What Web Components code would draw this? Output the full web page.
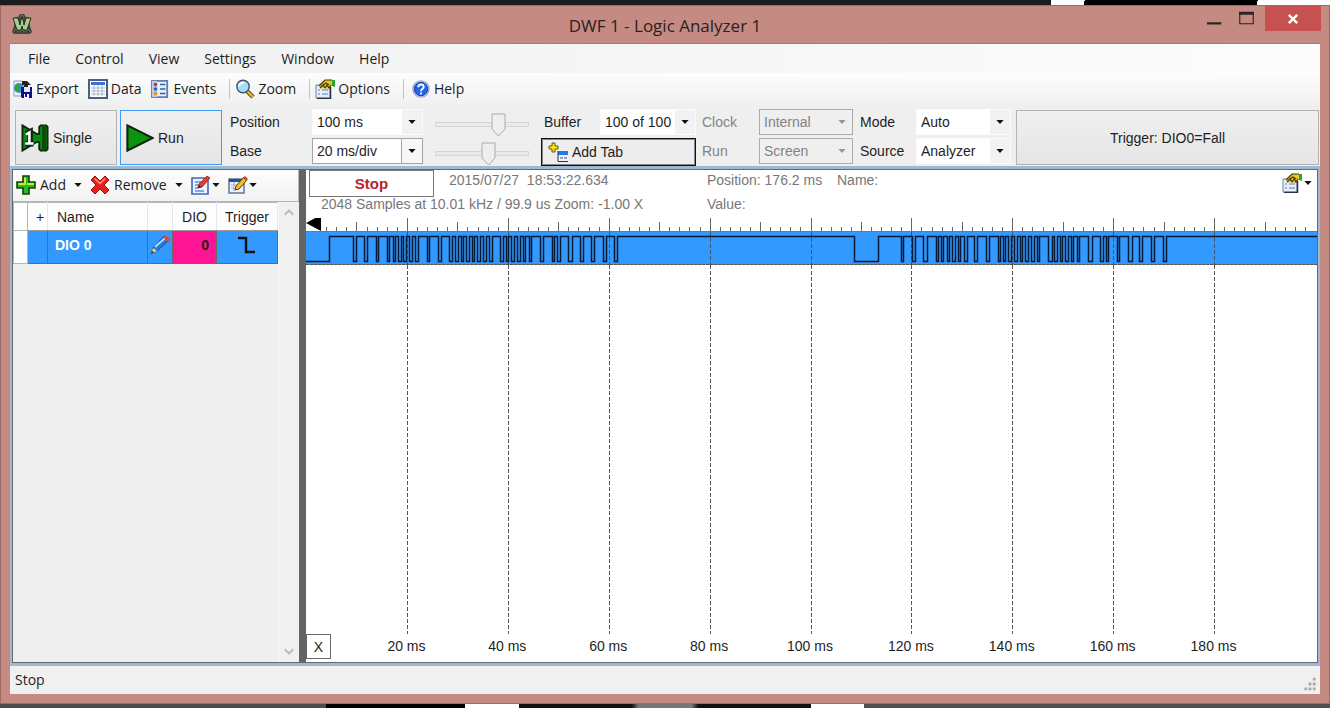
<!DOCTYPE html>
<html lang="en">
<head>
<meta charset="utf-8">
<title>DWF 1 - Logic Analyzer 1</title>
<style>
html, body { height: 100%; margin: 0; }
body {
  display: flex; flex-direction: column; box-sizing: border-box; padding: 5px 0 4px;
  font-family: "Liberation Sans", Arial, sans-serif; font-size: 14px; line-height: 16px; color: #1e1e1e;
  background:
    linear-gradient(100deg, #1c1c1c 79%, #fff 79% 81.5%, #000 81.5% 94.5%, #fff 94.5%) top / 100% 5px no-repeat,
    linear-gradient(90deg, #4c4c4c 24.5%, #000 24.5% 35%, #fff 35% 39%, #111 39% 47.5%, #777 48% 52%, #111 52.5% 61%, #fff 61% 65%, #4f4f4f 65%) bottom / 100% 4px no-repeat,
    #4c4c4c;
}
</style>
</head>
<body>
<dw-window>
  <dw-titlebar>DWF 1 - Logic Analyzer 1</dw-titlebar>
  <dw-menubar></dw-menubar>
  <dw-toolbar></dw-toolbar>
  <dw-controls></dw-controls>
  <dw-workspace></dw-workspace>
  <dw-status>Stop</dw-status>
</dw-window>

<script>
const define = (name, html, ready) => {
  const tpl = document.createElement('template');
  tpl.innerHTML = html;
  customElements.define(name, class extends HTMLElement {
    connectedCallback() {
      if (this.shadowRoot) return;
      const root = this.attachShadow({ mode: 'open' });
      root.append(tpl.content.cloneNode(true));
      if (ready) ready.call(this, root);
    }
  });
};

const icons = {
  app: `<path d="M6 3l2-3h4l2 3 3 0 1 9 2 6-2 2H2l-2-2 2-6 1-9z" fill="#42473f"/><path d="M2 18q2-4 4 0M8 18q2-4 4 0M14 18q2-4 4 0M8 4l2-3 2 3" fill="#20231e" stroke="#7b8076"/><path d="M1 4h5l2 7 1-6h2l1 6 2-7h5l-4 12h-4l-1-4-1 4H5z" fill="#a5cd91" stroke="#27321f"/>`,
  export: `<path d="M1 2h8l3 3v12H1z" fill="#edf3fb" stroke="#8b9bb4"/><circle cx="6" cy="9" r="5" fill="#3b8fd0"/><path d="M2 7l4-3 1 4-2 5-3-2z" fill="#36a03a"/><path d="M9 6V2h5l4 4h-3v3h-4V6z" fill="#222"/><path d="M8 8h11v11H9l-1-1z" fill="#11118a"/><path d="M11 8h6v5h-6z" fill="#dfe8fb"/><path d="M11 15h5v4h-5z" fill="#fff"/><path d="M12 15h2v3h-2z" fill="#11118a"/>`,
  data: `<path d="M1 1h18v18H1z" fill="#fff" stroke="#4b5f86" stroke-width="2"/><path d="M3 3h14v3H3z" fill="#3c73d8"/><path d="M3 9h14M3 12h14M3 15h14M6 6v11M10 6v11M14 6v11" stroke="#a4b4cf"/>`,
  events: `<path d="M1 1h17v18H1z" fill="#e5eefb" stroke="#5f7dad" stroke-width="2"/><path d="M1 1h6v18H1z" fill="#b8cdef"/><circle cx="5" cy="5" r="2" fill="#d82b20"/><circle cx="5" cy="10" r="2" fill="#2359cb"/><circle cx="5" cy="15" r="2" fill="#e79119"/><path d="M10 5h6M10 10h6M10 15h6" stroke="#3a5fa2" stroke-width="1.5"/>`,
  zoom: `<path d="M12 12l6 6" stroke="#6e4b05" stroke-width="4.5"/><path d="M12 12l6 6" stroke="#e9b831" stroke-width="2.4"/><circle cx="8" cy="7.500" r="6.200" fill="#a7ddf8" stroke="#3d5366" stroke-width="1.4"/><path d="M4 7q1-4 5-3" stroke="#fff" stroke-width="2" fill="none"/>`,
  options: `<path d="M1 6h14v13H1z" fill="#e6eefb" stroke="#6d83a8"/><path d="M3 11h2M3 15h2M7 11h6M7 15h6" stroke="#8fa3c6" stroke-width="1.5"/><path d="M15.500 8v11.500H2" stroke="#26344c" stroke-width="1.500" fill="none"/><path d="M4 6l6-5h7l2 2v4h-4l-2 4-3-3-4 2-1-2z" fill="#eac623"/><path d="M4 7l6-6h7M5 9l3-3 2 3 2-3 2 3 2-3M8 6l3-2 3 2" stroke="#40370a" stroke-width="1.200" fill="none"/><path d="M17 1h3v7l-3-1z" fill="#27a736"/>`,
  help: `<circle cx="10" cy="10" r="9" fill="#fff" stroke="#9aa9cf" stroke-width="1.500"/><circle cx="10" cy="10" r="7.500" fill="#2463e8" stroke="#0b2d9c"/><path d="M7 8q0-3 3-3t3 2.600q0 1.500-1.500 2.400T10 12.500M10 14v2" fill="none" stroke="#fff" stroke-width="2"/>`,
  add: `<path d="M7 1h6v6h6v6h-6v6H7v-6H1V7h6z" fill="#22bd22" stroke="#17430c" stroke-width="1.6"/><path d="M9 2.500v6.500H2.500M11 9h7" stroke="#d3e52c" stroke-width="2" fill="none"/>`,
  remove: `<path d="M5 1l5 5 5-5 4 4-5 5 5 5-4 4-5-5-5 5-4-4 5-5-5-5z" fill="#e3221c" stroke="#a40b08"/><path d="M4.500 3.500l5.500 5 5-5" stroke="#ff9285" stroke-width="1.500" fill="none"/>`,
  edit: `<path d="M1 3h16v16H1z" fill="#eaf1ff" stroke="#3c68bd" stroke-width="1.600"/><path d="M4 7h6M4 10h4M4 16h9M4 13h3" stroke="#6b8dd0" stroke-width="1.500"/><path d="M7 13l1-4 8-8 3 2-8 9z" fill="#e2402c" stroke="#8e1d14" stroke-width=".8"/><path d="M7 13l1-3 2 2z" fill="#222"/>`,
  sheet: `<path d="M1 4h15v14H1z" fill="#eef3fb" stroke="#62779b" stroke-width="1.500"/><path d="M1 4h12v3H1z" fill="#254f9d"/><path d="M3 10h7M3 13h5M6 7v9" stroke="#9bb0d3"/><path d="M7 15l1-4 8-9 3 3-8 9z" fill="#f0bf29" stroke="#574008"/><path d="M15 3l2-2 3 3-2 2z" fill="#d84430"/>`,
  pencil: `<path d="M1 19l2-6L14 1l5 4L7 16z" fill="#247bd9" stroke="#174c91"/><path d="M5 12L15 3" stroke="#a9dcff" stroke-width="2"/><path d="M13 2l2-2 5 4-2 3z" fill="#e5452e"/><path d="M1 19l2-6 4 3z" fill="#f7cb93"/><path d="M1 19l1-3 2 1z" fill="#222"/>`,
  tab: `<path d="M4 1h3v3h3v3H7v3H4V7H1V4h3z" fill="#f5df27" stroke="#6d5b08"/><path d="M10 9h10v10H10z" fill="#eef4ff"/><path d="M10 9h10v4H10z" fill="#237be4"/><path d="M10 9v10.500h10" stroke="#24344f" fill="none"/><path d="M12 16h3M16 16h3" stroke="#8ba1c7" stroke-width="2"/>`,
  play: `<path d="M1 1l18 9L1 19z" fill="#0b9410" stroke="#0d260d" stroke-width="1.500"/>`,
  single: `<path d="M1 1l10 6h2V2l1-1h4l1 1v16l-1 1h-4l-1-1v-5h-2L1 19z" fill="#0a8a12" stroke="#0d260d" stroke-width="1.300"/><path d="M15 1h3v18h-3z" fill="#0c4a10"/><path d="M3.500 7l3-1.500V14M3 14h6" stroke="#102810" stroke-width="4" fill="none"/><path d="M3.500 7.500l2.500-1.500V14M3 14h6" stroke="#fff" stroke-width="1.800" fill="none"/>`,
  fall: `<path d="M1 3h8v14h9" fill="none" stroke="#111" stroke-width="2.400"/>`,
  up: `<path d="M3 13l7-7 7 7" fill="none" stroke="#bdbdbd" stroke-width="3.500"/>`,
  down: `<path d="M3 7l7 7 7-7" fill="none" stroke="#bdbdbd" stroke-width="3.500"/>`,
  caret: `<path d="M1 5h18l-9 10z" fill="#111"/>`,
  min: `<path d="M0 15h19v3H0z" fill="#2b2426"/>`,
  max: `<path d="M1 3h18v14H1z" fill="none" stroke="#2b2426" stroke-width="1.500"/><path d="M0 1h20v4H0z" fill="#2b2426"/>`,
  close: `<path d="M3 3l14 14M17 3L3 17" stroke="#fff" stroke-width="4"/>`,
  grip: `<path d="M14 1h4v4h-4zM8 8h4v4H8zM14 8h4v4h-4zM2 15h4v4H2zM8 15h4v4H8zM14 15h4v4h-4z" fill="#a9a9a9"/>`
};
define('dw-icon', `<style>:host{display:inline-block;flex:none;width:20px;height:20px}svg{display:block;width:100%;height:100%}</style>`, function (root) {
  root.innerHTML += `<svg viewBox="0 0 20 20" aria-hidden="true">${icons[this.getAttribute('name')]}</svg>`;
});

define('dw-window', `<style>
:host{flex:1;min-height:0;display:flex;flex-direction:column;box-sizing:border-box;border:1px solid #9d6b65;padding:0 9px 9px;background:#c58b83}
</style><slot></slot>`);

define('dw-titlebar', `<style>
:host{display:grid;grid-template-columns:1fr auto 1fr;height:37px;flex:none;border-bottom:1px solid #a9756e;font-family:"Open Sans","Noto Sans",sans-serif;font-size:17px;line-height:40px;color:#2b2120}
.app{margin:8px 2px}
.buttons{display:flex;justify-content:flex-end;align-items:flex-start;gap:17px}
button{border:0;background:none;padding:0;display:flex;align-items:center;justify-content:center}
.min,.max{height:24px}
.min dw-icon,.max dw-icon{width:15px;height:15px}
.close{background:#c75050;width:56px;height:25px;margin:0 -1px 0 -6px}
.close dw-icon{width:12px;height:12px}
</style><dw-icon class="app" name="app"></dw-icon><slot></slot><div class="buttons">
<button class="min" aria-label="Minimize"><dw-icon name="min"></dw-icon></button><button class="max" aria-label="Maximize"><dw-icon name="max"></dw-icon></button><button class="close" aria-label="Close"><dw-icon name="close"></dw-icon></button></div>`);

define('dw-menubar', `<style>
:host{display:block;flex:none;background:linear-gradient(90deg,#f0f0f0,#fcfcfc)}
nav{display:flex;gap:25px;padding:0 18px;height:29px}
button{border:0;background:none;padding:0;font:14px/20px "Open Sans","Noto Sans",sans-serif;color:#1e1e1e}
</style><nav><button>File</button><button>Control</button><button>View</button><button>Settings</button><button>Window</button><button>Help</button></nav>`);

define('dw-toolbar', `<style>
:host{display:flex;align-items:center;flex:none;height:32px;padding-left:3px;background:linear-gradient(#fdfdfd,#f0f0f0)}
button{display:flex;align-items:center;gap:3px;border:0;background:none;padding:0 9px 0 0;font:14px/20px "Open Sans","Noto Sans",sans-serif;color:#1e1e1e}
i{width:1px;height:20px;background:#c4c4c4;margin:0 5px 0 4px}
.events dw-icon{width:18px;height:18px;margin-right:2px}.help dw-icon{width:18px;height:18px;margin:0 1px 0 3px}
</style><button><dw-icon name="export"></dw-icon>Export</button><button><dw-icon name="data"></dw-icon>Data</button><button class="events"><dw-icon name="events"></dw-icon>Events</button><i></i><button><dw-icon name="zoom"></dw-icon>Zoom</button><i></i><button><dw-icon name="options"></dw-icon>Options</button><i></i><button class="help"><dw-icon name="help"></dw-icon>Help</button>`);

define('dw-field', `<style>
:host{display:flex;align-items:center;height:26px}
label{flex:none;width:var(--label,56px)}
.box{position:relative;flex:1;display:flex;height:26px;box-sizing:border-box;background:#fff;border:1px solid #fbfbfb}
select{appearance:none;flex:1;min-width:0;border:0;padding:0 0 0 4px;background:none;font:inherit;color:inherit;opacity:1}
.arrow{width:20px;display:flex;align-items:center;justify-content:center;background:#f2f2f2;pointer-events:none}
.arrow dw-icon{width:8px;height:8px}
:host([framed]) .box{border-color:#a4a4a4}
:host([framed]) .arrow{border-left:1px solid #a4a4a4;background:#f7f7f7}
:host([off]){color:#838383}
:host([off]) .box{background:#efefef;border-color:#ababab}
:host([off]) .arrow{background:none;opacity:.4}
</style><label for="s"></label><div class="box"><select id="s"></select><span class="arrow"><dw-icon name="caret"></dw-icon></span></div>`, function (root) {
  root.querySelector('label').textContent = this.getAttribute('label');
  const s = root.querySelector('select');
  s.add(new Option(this.getAttribute('value')));
  s.disabled = this.hasAttribute('off');
});

define('dw-slider', `<style>
:host{display:flex;height:26px;align-items:center}
input{appearance:none;width:94px;height:26px;margin:0;background:none}
input::-webkit-slider-runnable-track{height:5px;box-sizing:border-box;border:1px solid #d5d5d5;background:#e9ebeb}
input::-webkit-slider-thumb{appearance:none;width:15px;height:24px;margin-top:-10px;border:0;background:url("data:image/svg+xml,%3Csvg xmlns='http://www.w3.org/2000/svg' viewBox='0 0 15 24'%3E%3Cpath d='M1 1h13v15l-6.500 7L1 16z' fill='%23eee' stroke='%23acacac'/%3E%3C/svg%3E")}
</style><input type="range">`, function (root) {
  const i = root.querySelector('input');
  i.value = this.getAttribute('value');
  i.setAttribute('aria-label', this.getAttribute('label'));
});

define('dw-controls', `<style>
:host{display:flex;flex:none;height:57px;padding:4px 1px 0 5px;background:#efefef}
button{box-sizing:border-box;font:inherit;color:inherit;border:1px solid #b4b4b4;background:linear-gradient(#f0f0f0,#e5e5e5);margin:0;padding:0}
.big{width:102px;height:55px;margin:1px 3px 0 0;display:flex;align-items:center;gap:4px;padding-left:5px}
.big dw-icon{width:28px;height:28px}
.run{border-color:#3e9bf5}
.col{display:flex;flex-direction:column;gap:3px}
.time{--label:82px;width:193px;margin-left:5px}
.slide{margin:2px 12px 0 12px}
.buffer{width:155px;--label:56px;margin-right:6px}
.buffer dw-field{margin-left:3px}
.clock{width:151px;--label:57px;margin-right:7px}
.mode{width:151px;--label:56px;margin-right:5px}
.tab{height:29px;border:1px solid #111;outline:1px solid #888;outline-offset:-2px;background:#ededed;display:flex;align-items:center;gap:4px;padding-left:6px}
.trigger{flex:1;height:55px;margin-top:1px}
</style>
<button class="big"><dw-icon name="single"></dw-icon>Single</button><button class="big run"><dw-icon name="play"></dw-icon>Run</button>
<div class="col time"><dw-field label="Position" value="100 ms"></dw-field><dw-field framed label="Base" value="20 ms/div"></dw-field></div>
<div class="col slide"><dw-slider label="Position" value="72"></dw-slider><dw-slider label="Base" value="58"></dw-slider></div>
<div class="col buffer"><dw-field label="Buffer" value="100 of 100"></dw-field><button class="tab"><dw-icon name="tab"></dw-icon>Add Tab</button></div>
<div class="col clock"><dw-field off label="Clock" value="Internal"></dw-field><dw-field off label="Run" value="Screen"></dw-field></div>
<div class="col mode"><dw-field label="Mode" value="Auto"></dw-field><dw-field label="Source" value="Analyzer"></dw-field></div>
<button class="trigger">Trigger: DIO0=Fall</button>`);

define('dw-workspace', `<style>
:host{flex:1;min-height:0;display:flex;border:solid #9db9d6;border-width:3px 2px 3px;background:#fff}
.in{flex:1;min-width:0;display:flex;border:1px solid #696969}
dw-channels{width:286px;flex:none}
.split{width:7px;flex:none;background:#646464}
dw-plot{flex:1;min-width:0}
</style><div class="in"><dw-channels></dw-channels><div class="split"></div><dw-plot></dw-plot></div>`);

define('dw-channels', `<style>
:host{display:flex;flex-direction:column;background:#efefef}
.bar{display:flex;align-items:center;height:30px;padding:0 0 1px 3px;background:linear-gradient(#fdfdfd,#f2f2f2);border-bottom:1px solid #b5b5b5;border-right:1px solid #b5b5b5}
button{display:flex;align-items:center;gap:4px;border:0;background:none;padding:0;margin-right:8px;font:14px/20px "Open Sans","Noto Sans",sans-serif;color:#1e1e1e}
.caret{width:8px;height:8px;margin-left:4px}
.tight{margin-left:-3px}
.body{flex:1;display:flex;align-items:stretch}
.left{flex:1}
table{width:100%;border-collapse:collapse;table-layout:fixed}
th,td{padding:0;border:1px solid #696969;box-sizing:border-box;text-align:left}
th{height:28px;font-weight:normal;background:#fdfdfd;border-color:#b5b5b5 #dfeaf5 #9a9a9a}
td{height:33px;padding-bottom:4px;background:#3399ff;font-weight:bold}
td:first-child,th:first-child{background:#fff;border-color:#b5b5b5}
.c{text-align:center}.plus{padding-left:5px}.n{padding-left:7px;color:#fff}th.n{padding-left:9px;color:inherit}
.d{background:#ff1493;text-align:right;padding-right:7px}
td dw-icon{display:block;margin:auto}
.scroll{width:21px;display:flex;flex-direction:column;justify-content:space-between;align-items:center;padding:5px 0;box-sizing:border-box;border-left:1px solid #fafafa;background:#f0f0f0}
.scroll dw-icon{width:12px;height:12px}
</style>
<div class="bar"><button><dw-icon name="add"></dw-icon>Add<dw-icon class="caret" name="caret"></dw-icon></button><button><dw-icon name="remove"></dw-icon>Remove<dw-icon class="caret" name="caret"></dw-icon></button><button aria-label="Edit"><dw-icon name="edit"></dw-icon><dw-icon class="caret tight" name="caret"></dw-icon></button><button aria-label="View"><dw-icon name="sheet"></dw-icon><dw-icon class="caret tight" name="caret"></dw-icon></button></div>
<div class="body"><div class="left"><table>
<colgroup><col style="width:14px"><col style="width:20px"><col style="width:100px"><col style="width:25px"><col style="width:44px"><col></colgroup>
<thead><tr><th></th><th class="c plus">+</th><th class="n">Name</th><th></th><th class="c">DIO</th><th class="c">Trigger</th></tr></thead>
<tbody><tr><td></td><td></td><td class="n">DIO 0</td><td><dw-icon name="pencil"></dw-icon></td><td class="d">0</td><td><dw-icon name="fall"></dw-icon></td></tr></tbody></table></div>
<div class="scroll"><dw-icon name="up"></dw-icon><dw-icon name="down"></dw-icon></div></div>`);

/* Low intervals of DIO 0, in units of 1/1011 of the plot width. */
const lows = [[-2,23],
 [47,50],[58,61],[70,72],[81,83],[87,89],[92,95],[97,100],[103,106],[109,112],[121,123],[132,135],[143,146],[149,152],[155,157],[160,163],[166,168],[171,174],[177,180],[183,186],[194,197],[200,202],[205,208],[211,214],[217,219],[223,225],[234,237],[246,248],[251,254],[262,266],[274,277],[285,288],[297,300],[308,311],
 [548,572],[595,597],[606,609],[617,621],[630,632],[635,637],[641,643],[646,649],[652,654],[658,661],[668,671],[680,683],[692,694],[697,699],[702,705],[708,711],[714,716],[719,722],[725,728],[731,733],[742,746],[748,751],[754,756],[759,762],[765,767],[771,773],[782,786],[794,797],[800,802],[811,813],[822,826],[833,836],[845,848],[857,860]];

define('dw-plot', `<style>
:host{display:flex;flex-direction:column;background:#fff}
.info{display:grid;grid-template-columns:143px 258px 130px 1fr auto;grid-template-rows:24px 24px;color:#777}
.state{grid-row:1;box-sizing:border-box;width:125px;height:27px;margin-left:3px;border:1px solid #777;text-align:center;line-height:26px;font-weight:bold;color:#b8222b;font-size:15px}
.info span{line-height:20px}
.sum{grid-column:1/3;grid-row:2;padding-left:15px}
.value{grid-column:3;grid-row:2}
.opt{grid-row:1;grid-column:5;display:flex;align-items:center;gap:2px;border:0;background:none;padding:0 5px 0 0;height:26px}
.opt .caret{width:8px;height:8px}
svg{display:block;width:100%}
.ruler{height:13px}.lane{height:33px;background:#3399ff;border-top:1px solid #777}
.grid{flex:1;min-height:0}
.axis{display:flex;height:28px;align-items:flex-start}
.axis button{box-sizing:border-box;width:25px;height:25px;margin-right:25px;padding:0;border:1px solid #696969;background:#fff;font:inherit;color:inherit}
ol{flex:1;display:grid;grid-template-columns:repeat(9,1fr);margin:0 53px 0 0;padding:0;list-style:none;text-align:center;line-height:24px}
</style>
<div class="info"><div class="state">Stop</div><span>2015/07/27&nbsp; 18:53:22.634</span><span>Position: 176.2 ms</span><span>Name:</span><button class="opt" aria-label="Plot options"><dw-icon name="options"></dw-icon><dw-icon class="caret" name="caret"></dw-icon></button>
<span class="sum">2048 Samples at 10.01 kHz / 99.9 us Zoom: -1.00 X</span><span class="value">Value:</span></div>
<div class="scale"></div>
<svg class="grid"></svg>
<div class="axis"><button>X</button><ol></ol></div>`, function (root) {
  let ticks = '', dash = '', rows = '';
  for (let i = 2; i < 100; i++) {
    const x = Math.round(i * 10.09) + .5, y = i % 10 === 0 ? 0 : i % 5 === 0 ? 4 : 9;
    ticks += `M${x} ${y}V13`;
  }
  for (let i = 1; i < 10; i++) {
    const x = Math.round(i * 100.9) + .5;
    dash += `M${x} 0V33`;
    rows += `<line x1="${x / 10.11}%" x2="${x / 10.11}%" y1="0" y2="100%" stroke="#555" stroke-dasharray="4 2"/>`;
    root.querySelector('ol').innerHTML += `<li>${i * 20} ms</li>`;
  }
  const wave = 'M0 29.500' + lows.map(([a, b]) => (a < 0 ? '' : `H${a + .5}V29.500`) + `H${b + .5}V4.500`).join('') + 'H1011';
  root.querySelector('.scale').innerHTML = `<svg class="ruler" viewBox="0 0 1011 13" preserveAspectRatio="none"><path d="${ticks}" stroke="#666" fill="none"/><path d="M0 5l15-8v16z" fill="#000"/></svg>
<svg class="lane" viewBox="0 0 1011 33" preserveAspectRatio="none"><path d="${dash}" stroke="#456" stroke-dasharray="4 2" fill="none"/><path d="${wave}" stroke="#061b33" stroke-width="1.500" fill="none"/><path d="M0 32.500H1011" stroke="#555" stroke-dasharray="3 1" fill="none"/></svg>`;
  root.querySelector('.grid').innerHTML = rows;
});

define('dw-status', `<style>
:host{display:flex;justify-content:space-between;align-items:center;flex:none;height:28px;padding-left:5px;background:#f0f0f0;font:14px/20px "Open Sans","Noto Sans",sans-serif}
dw-icon{width:14px;height:14px;margin:8px 3px 0 0}
</style><slot></slot><dw-icon name="grip"></dw-icon>`);
</script>
</body>
</html>
